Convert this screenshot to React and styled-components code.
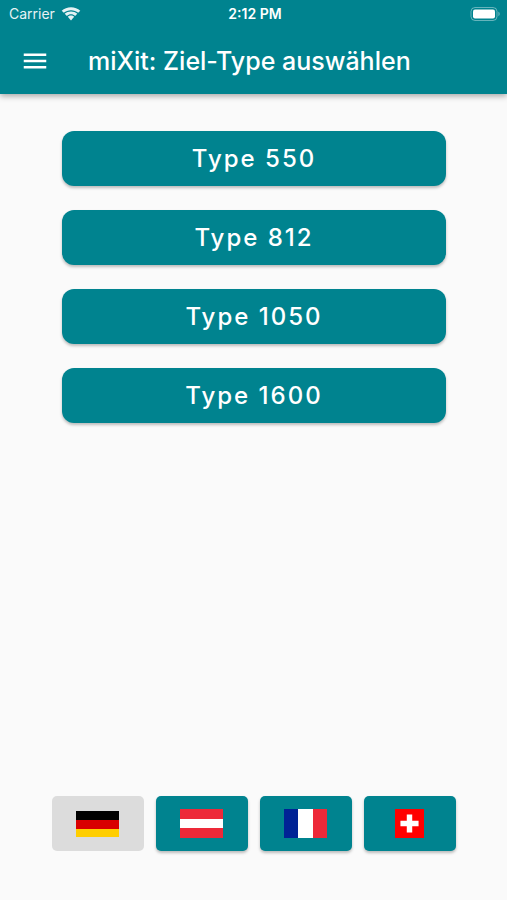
import { useState } from 'react'
import styled, { createGlobalStyle } from 'styled-components'

const types = ['Type 550', 'Type 812', 'Type 1050', 'Type 1600'];

const countries = [
  {
    name: 'Deutschland',
    flag: (
      <svg width='43' height='26' viewBox='0 0 43 26' shapeRendering='crispEdges'>
        <path fill='#000' d='M0 0h43v9H0z'/>
        <path fill='#d90000' d='M0 9h43v9H0z'/>
        <path fill='#ffce00' d='M0 18h43v8H0z'/>
      </svg>
    )
  },
  {
    name: 'Österreich',
    flag: (
      <svg width='43' height='29' viewBox='0 0 43 29' shapeRendering='crispEdges'>
        <path fill='#ed2939' d='M0 0h43v29H0z'/>
        <path fill='#fff' d='M0 10h43v9H0z'/>
      </svg>
    )
  },
  {
    name: 'Frankreich',
    flag: (
      <svg width='43' height='29' viewBox='0 0 43 29' shapeRendering='crispEdges'>
        <path fill='#002395' d='M0 0h14v29H0z'/>
        <path fill='#fff' d='M14 0h15v29H14z'/>
        <path fill='#ed2939' d='M29 0h14v29H29z'/>
      </svg>
    )
  },
  {
    name: 'Schweiz',
    flag: (
      <svg width='29' height='29' viewBox='0 0 32 32'>
        <path fill='#f00' d='M0 0h32v32H0z'/>
        <path fill='#fff' d='M13 6h6v7h7v6h-7v7h-6v-7H6v-6h7z'/>
      </svg>
    )
  }
];

const Wifi = () => (
  <svg width='20' height='14' viewBox='0 0 20 14' fill='#fff' aria-hidden='true'>
    <path d='M10 0.200C6.500 0.200 3.100 1.500 0.700 3.700L2.800 5.800C4.700 4.100 7.200 3.200 10 3.200s5.300 0.900 7.200 2.600l2.100-2.100C16.900 1.500 13.500 0.200 10 0.200z'/>
    <path d='M10 4.400c-2.400 0-4.600 0.900-6.300 2.300l2.200 2.200C7 7.900 8.400 7.300 10 7.300s3 0.600 4.100 1.600l2.200-2.200c-1.700-1.400-3.900-2.300-6.300-2.300z'/>
    <path d='M10 8.500c-1.200 0-2.400 0.500-3.200 1.200l3.200 3.700 3.200-3.700c-0.800-0.700-2-1.200-3.200-1.200z'/>
  </svg>
)

const Battery = () => (
  <svg width='31' height='14' viewBox='0 0 31 14' aria-hidden='true'>
    <rect x='1' y='0.500' width='26' height='13' rx='4' fill='none' stroke='#fff' strokeOpacity='0.4'/>
    <rect x='3' y='2.500' width='22' height='9' rx='2' fill='#fff'/>
    <path d='M28.500 4.800c1.400 0.500 1.400 3.900 0 4.400z' fill='#fff' fillOpacity='0.5'/>
  </svg>
)

export default function App() {
  const [country, setCountry] = useState('Deutschland');

  return (
    <Page>
      <GlobalStyle/>
      <Header>
        <StatusBar>
          <Carrier>Carrier <Wifi/></Carrier>
          <Clock>2:12 PM</Clock>
          <Power><Battery/></Power>
        </StatusBar>
        <Toolbar>
          <MenuButton type='button' aria-label='Menü'>
            <svg width='30' height='30' viewBox='0 0 24 24' fill='#fff'>
              <path d='M3 18h18v-2H3v2zm0-5h18v-2H3v2zm0-7v2h18V6H3z'/>
            </svg>
          </MenuButton>
          <Title>miXit: Ziel-Type auswählen</Title>
        </Toolbar>
      </Header>
      <TypeList>
        {
          types.map((type) =>
            <TypeButton key={type} type='button'>{type}</TypeButton>
          )
        }
      </TypeList>
      <Countries>
        {
          countries.map((item) =>
            <CountryButton
              key={item.name}
              type='button'
              aria-label={item.name}
              aria-pressed={country === item.name}
              $active={country === item.name}
              onClick={() => setCountry(item.name)}
            >
              {item.flag}
            </CountryButton>
          )
        }
      </Countries>
    </Page>
  )
}

const GlobalStyle = createGlobalStyle`
  body {
    margin: 0;
    background: #fafafa;
  }
  * {
    box-sizing: border-box;
  }
  button {
    border: 0;
    padding: 0;
    font-family: inherit;
    cursor: pointer;
  }
  svg {
    display: block;
  }
`;

const Page = styled.div`
  display: flex;
  flex-direction: column;
  min-height: 100vh;
  background: #fafafa;
  color: #fff;
  font-family: Inter, 'Liberation Sans', sans-serif;
`;

const Header = styled.header`
  background: #00838f;
  box-shadow: 0 2px 6px rgba(0, 0, 0, 0.35);
`;

const StatusBar = styled.div`
  display: grid;
  grid-template-columns: 1fr auto 1fr;
  align-items: center;
  height: 27px;
  padding: 0 6px 0 9px;
  font-size: 14px;
`;

const Carrier = styled.span`
  display: flex;
  align-items: center;
  gap: 6px;
  opacity: 0.9;
`;

const Clock = styled.span`
  font-weight: 600;
`;

const Power = styled.span`
  justify-self: end;
`;

const Toolbar = styled.div`
  display: flex;
  align-items: center;
  gap: 38px;
  height: 67px;
  padding: 0 20px;
`;

const MenuButton = styled.button`
  background: none;
`;

const Title = styled.h1`
  margin: 0;
  font-size: 25px;
  font-weight: 500;
  line-height: 32px;
  white-space: nowrap;
`;

const TypeList = styled.main`
  display: flex;
  flex: 1;
  flex-direction: column;
  gap: 24px;
  padding: 37px 61px 24px 62px;
`;

const TypeButton = styled.button`
  height: 55px;
  border-radius: 12px;
  background: #00838f;
  box-shadow: 0 2px 3px rgba(0, 0, 0, 0.25);
  color: #fff;
  font-size: 24px;
  font-weight: 500;
  letter-spacing: 2px;
`;

const Countries = styled.footer`
  display: flex;
  justify-content: center;
  gap: 12px;
  padding: 0 24px 49px;
`;

const CountryButton = styled.button`
  display: flex;
  align-items: center;
  justify-content: center;
  width: 92px;
  height: 55px;
  border-radius: 5px;
  background: ${prop => prop.$active ? '#dcdcdc' : '#00838f'};
  box-shadow: ${prop => prop.$active ? 'none' : '0 2px 3px rgba(0, 0, 0, 0.25)'};
`;
